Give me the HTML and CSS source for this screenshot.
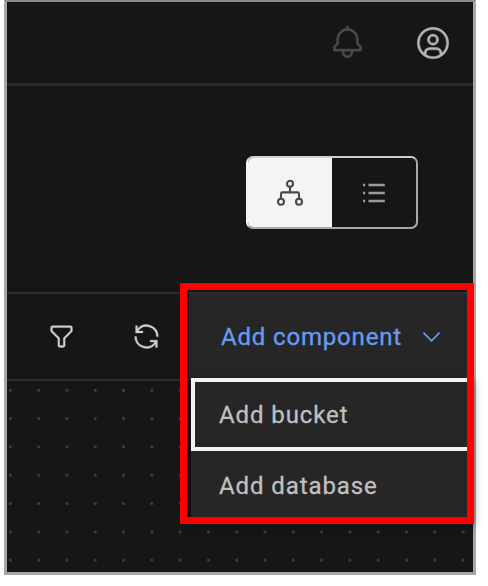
FILE: index.html
```html
<!DOCTYPE html>
<html lang="en">
<head>
<meta charset="utf-8">
<title>Components</title>
<link rel="stylesheet" href="styles.css">
</head>
<body>
<main class="panel">
  <header class="topbar">
    <svg class="icon bell" viewBox="0 0 32 32"><path d="M28.7071,19.293,26,16.5859V13a10.0136,10.0136,0,0,0-9-9.9492V1H15V3.0508A10.0136,10.0136,0,0,0,6,13v3.5859L3.2929,19.293A1,1,0,0,0,3,20v3a1,1,0,0,0,1,1h7v.7768a5.152,5.152,0,0,0,4.5,5.1987A5.0057,5.0057,0,0,0,21,25V24h7a1,1,0,0,0,1-1V20A1,1,0,0,0,28.7071,19.293ZM19,25a3,3,0,0,1-6,0V24h6Zm8-3H5V20.4141L7.707,17.707A1,1,0,0,0,8,17V13a8,8,0,0,1,16,0v4a1,1,0,0,0,.293.707L27,20.4141Z"/></svg>
    <svg class="icon user" viewBox="0 0 32 32"><path d="M16,8a5,5,0,1,0,5,5A5,5,0,0,0,16,8Zm0,8a3,3,0,1,1,3-3A3.0034,3.0034,0,0,1,16,16Z"/><path d="M16,2A14,14,0,1,0,30,16,14.0158,14.0158,0,0,0,16,2ZM10,26.3765V25a3.0033,3.0033,0,0,1,3-3h6a3.0033,3.0033,0,0,1,3,3v1.3765a11.8989,11.8989,0,0,1-12,0Zm13.9925-1.4507A5.0016,5.0016,0,0,0,19,20H13a5.0016,5.0016,0,0,0-4.9925,4.9258,12,12,0,1,1,15.985,0Z"/></svg>
  </header>
  <section class="heading">
    <div class="switcher">
      <div class="view selected">
        <svg class="tree" viewBox="0 0 28 28"><circle cx="14" cy="4.8" r="3"/><circle cx="5" cy="22.8" r="3"/><circle cx="23" cy="22.8" r="3"/><path d="M14 7.8v5.6M5 19.8v-5q0-1.4 1.4-1.4h15.2q1.4 0 1.4 1.4v5"/></svg>
      </div>
      <div class="view">
        <svg class="list" viewBox="0 0 24 20"><path d="M1 2h2.200M6.500 2h16.300M1 10h2.200M6.500 10h16.300M1 18h2.200M6.500 18h16.300"/></svg>
      </div>
    </div>
  </section>
  <section class="toolbar">
    <div class="tool"><svg class="small" viewBox="0 0 32 32"><path d="M18,28H14a2,2,0,0,1-2-2V18.410L4.590,11A2,2,0,0,1,4,9.590V6A2,2,0,0,1,6,4H26a2,2,0,0,1,2,2V9.590A2,2,0,0,1,27.410,11L20,18.410V26A2,2,0,0,1,18,28ZM6,6V9.590l8,8V26h4V17.590l8-8V6Z"/></svg></div>
    <div class="tool"><svg class="small" viewBox="0 0 32 32"><path d="M12,10H6.780A11,11,0,0,1,27,16h2A13,13,0,0,0,6,7.680V4H4v8h8Z"/><path d="M20,22h5.220A11,11,0,0,1,5,16H3a13,13,0,0,0,23,8.320V28h2V20H20Z"/></svg></div>
    <div class="add"><span class="add-label">Add component</span><svg class="chevron" viewBox="0 0 20 12"><path d="M1.5 1.5 10 10l8.500-8.500"/></svg></div>
  </section>
  <section class="canvas"></section>
  <div class="menu">
    <div class="item focused"><span class="bucket">Add bucket</span></div>
    <div class="item"><span class="database">Add database</span></div>
  </div>
</main>
<div class="highlight"></div>
</body>
</html>
```
FILE: styles.css
```css
* { box-sizing: border-box; }
body { margin: 0; background: #fff; font-family: Roboto, "Liberation Sans", sans-serif; font-size: 24px; }
svg { display: block; flex: none; }

.panel {
  position: relative;
  display: flex;
  flex-direction: column;
  width: 472px;
  height: 575px;
  margin-left: 4px;
  border: 3px solid #a6a6a6;
  border-top: 2px solid #8a8a8a;
  background: #161616;
}
.topbar {
  display: flex;
  align-items: center;
  justify-content: flex-end;
  gap: 50px;
  height: 84px;
  padding-right: 23px;
  border-bottom: 3px solid #2c2c2c;
}
.icon { width: 35px; height: 35px; stroke-width: 0.4; }
.bell { fill: #4a4a4a; stroke: #4a4a4a; }
.user { width: 36px; height: 36px; margin-right: -1px; fill: #b4b4b4; stroke: #b4b4b4; }

.heading {
  display: flex;
  justify-content: flex-end;
  height: 206px;
  padding: 70px 55px 0 0;
}
.switcher {
  display: flex;
  width: 172px;
  height: 73px;
  border: 2.5px solid #a9a9a9;
  border-top-color: #cfcfcf;
  border-left-color: #f4f4f4;
  border-radius: 7px;
  overflow: hidden;
}
.view { display: flex; flex: 1; align-items: center; justify-content: center; }
.selected { background: #f4f4f4; }
.tree { width: 28px; height: 28px; fill: none; stroke: #4a4a4a; stroke-width: 2.1; }
.list { width: 24px; height: 20px; fill: none; stroke: #9b9b9b; stroke-width: 2.5; }

.toolbar {
  display: flex;
  height: 89px;
  padding-left: 12px;
  border-top: 2px solid #2c2c2c;
  border-bottom: 2px solid #2c2c2c;
}
.tool { display: flex; width: 85px; align-items: center; justify-content: center; }
.small { width: 29px; height: 29px; fill: #d2d2d2; stroke: #d2d2d2; stroke-width: 0.4; }
.add {
  display: flex;
  flex: 1;
  align-items: center;
  padding-left: 32px;
  background: #262626;
  color: #689af2;
}
.add-label { width: 201px; letter-spacing: 0.83px; white-space: nowrap; -webkit-text-stroke: 0.35px; }
.chevron { width: 19px; height: 12px; fill: none; stroke: #689af2; stroke-width: 1.9; }

.canvas {
  flex: 1;
  background-image: radial-gradient(circle, #444 0.8px, transparent 2px);
  background-size: 28.3px 28.3px;
  background-position: -10.8px -4.8px;
}
.menu {
  position: absolute;
  top: 376px;
  left: 184px;
  width: 282px;
  background: #262626;
  color: #c0c0c0;
  box-shadow: 0 3px 9px rgba(0, 0, 0, 0.5);
}
.item { display: flex; height: 70px; align-items: center; padding-left: 28px; }
.focused { height: 73px; padding-left: 24px; border: 4px solid #f4f4f4; border-right: 0; }
.bucket, .database { letter-spacing: 0.9px; white-space: nowrap; -webkit-text-stroke: 0.3px; }
.highlight {
  position: absolute;
  top: 283px;
  left: 180px;
  width: 294px;
  height: 241px;
  border: 7px solid #f00;
}
```
